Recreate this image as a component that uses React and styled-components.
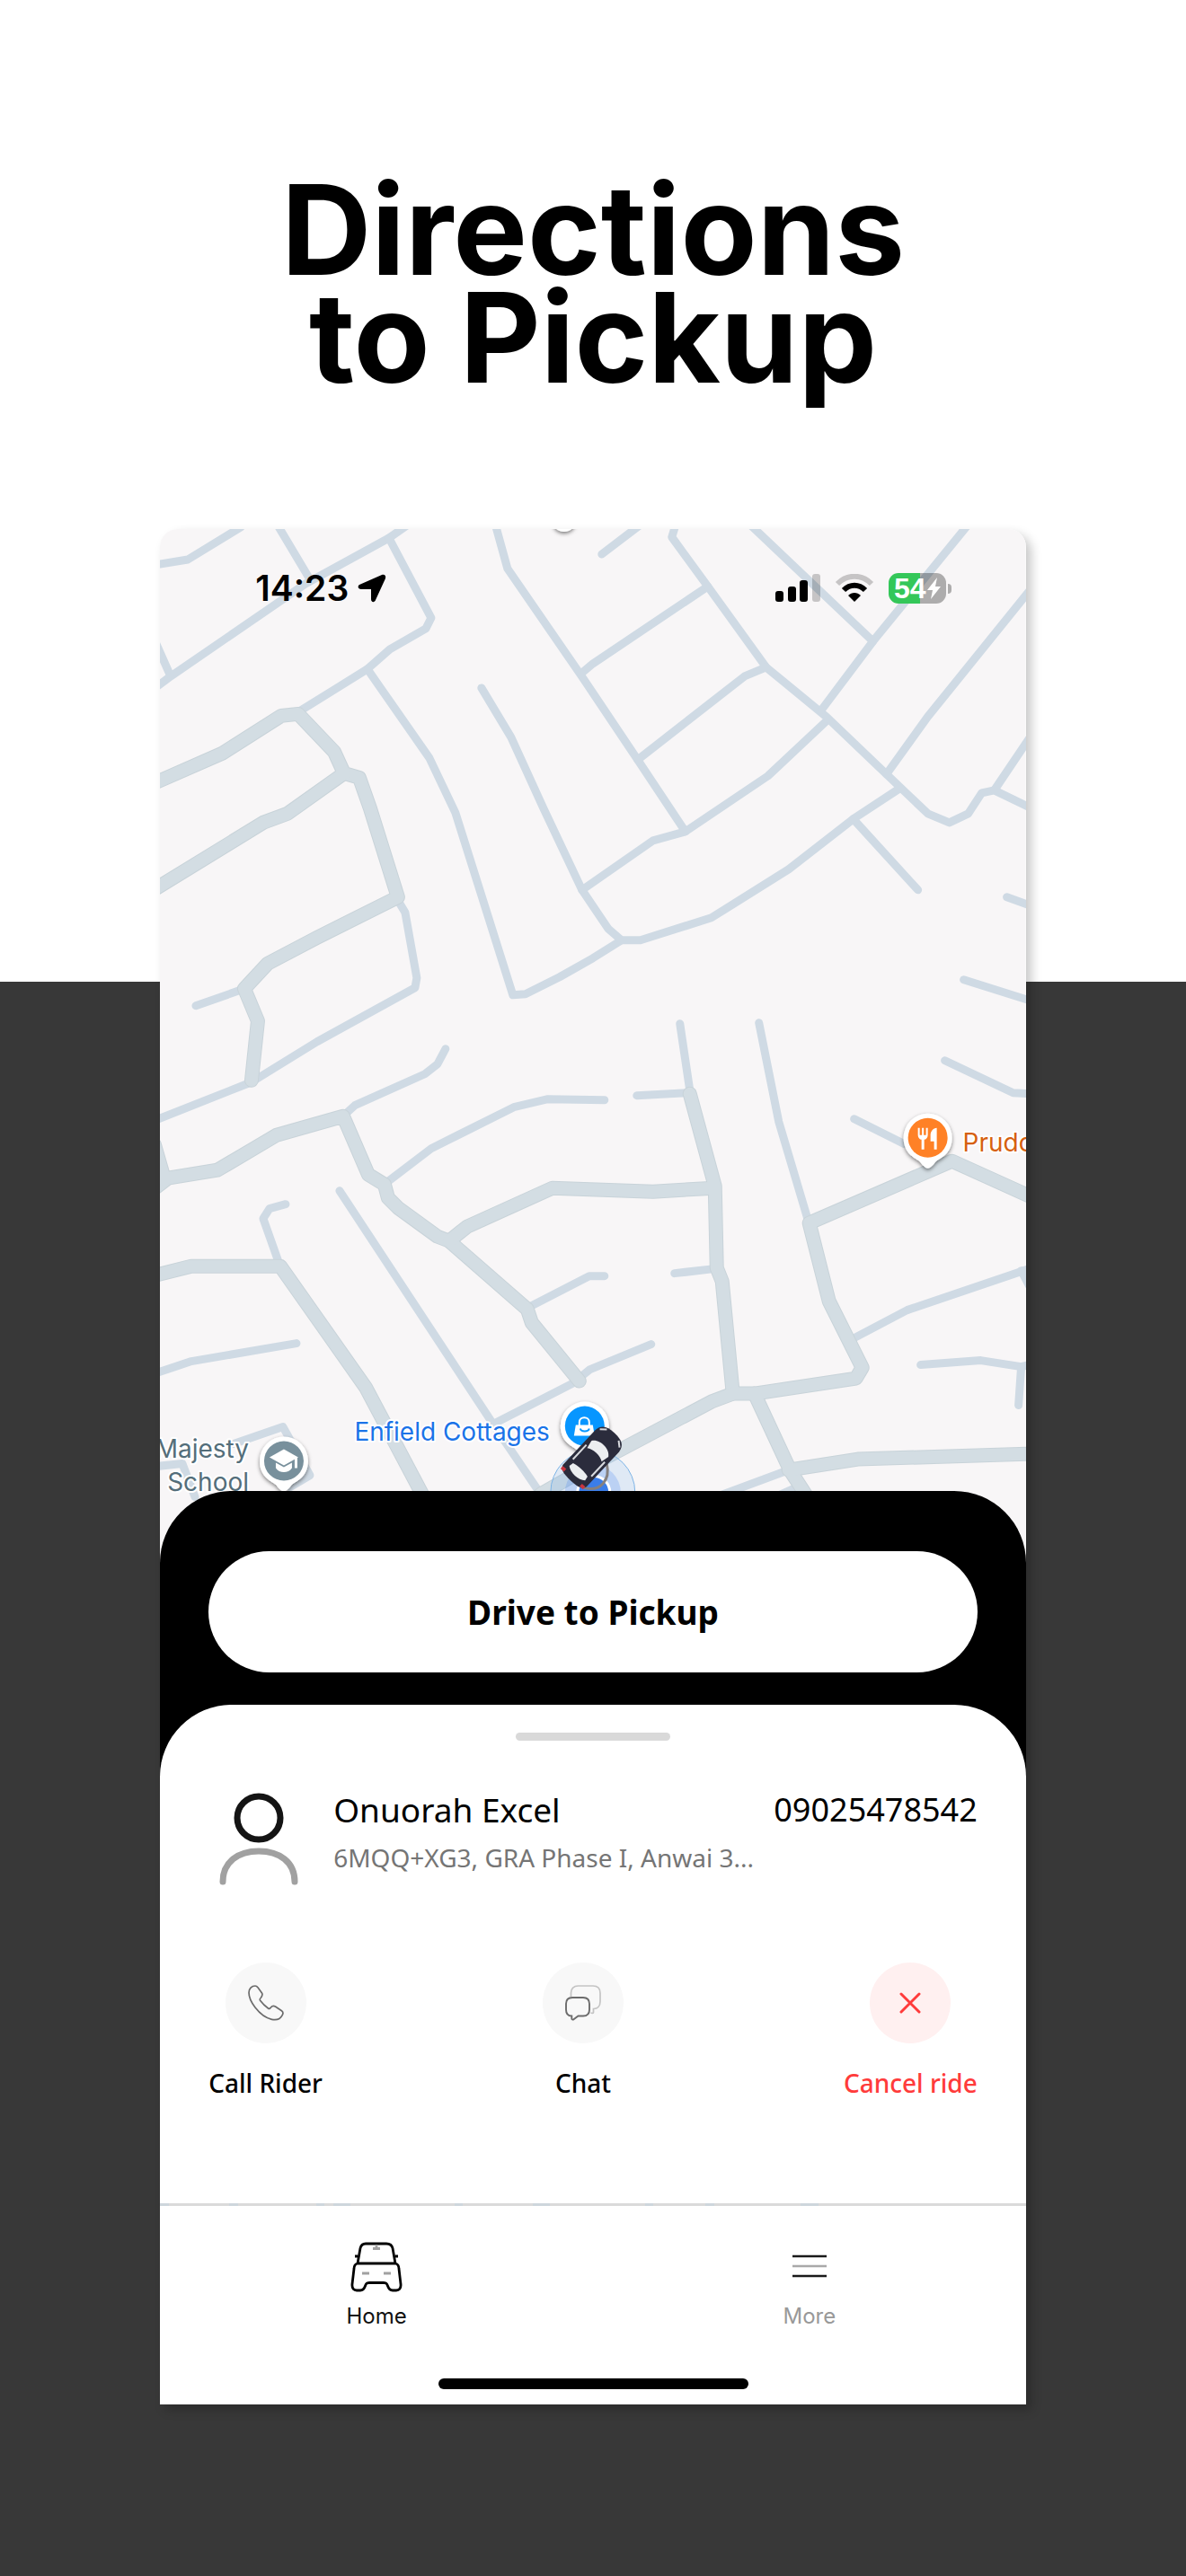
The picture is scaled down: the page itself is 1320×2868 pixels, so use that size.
import React from 'react';
import styled, { createGlobalStyle } from 'styled-components';

const MINOR_ROADS = [
  '0,39 31,34 90,-2',
  '130,-6 167,56',
  '-4,176 12,164 162,61 255,10 275,-4',
  '-4,128 11,162',
  '255,10 302,99 296,111 256,134 231,156 157,202',
  '231,156 300,255 329,316 393,519 407,518 445,499 482,478 514,458',
  '374,-3 387,44 469,163 532,257 585,337',
  '358,177 391,232 427,311 470,402 499,445 514,458 535,458 614,433 700,379 772,323 822,290',
  '470,402 549,347 585,337 677,275 744,212',
  '469,161 482,150 610,64',
  '574,-4 570,9 610,64 675,154 742,209 809,273 855,317 879,327 900,317 915,294 929,291 968,310',
  '532,257 651,164 675,154',
  '492,28 534,-4',
  '656,-6 775,107 794,125',
  '900,-5 794,125 737,201',
  '968,69 855,209 809,273',
  '968,233 929,291',
  '772,323 844,402',
  '943,410 968,419',
  '895,502 968,525',
  '264,412 273,427 286,500 284,511 175,571 102,616 -4,658',
  '40,531 94,512',
  '206,652 217,642 295,607 309,596 318,579',
  '251,729 302,690 394,644 432,635 495,636',
  '200,737 371,997 424,1075',
  '140,752 122,757 115,768 132,816',
  '-4,940 35,927 152,907',
  '410,867 478,832 495,832',
  '371,997 459,952 479,936 547,908',
  '82,1019 137,1000 167,1054 145,1067',
  '-4,1044 25,1041 39,1078',
  '579,551 590,625',
  '531,631 588,628',
  '667,550 689,660 722,771',
  '573,829 617,824',
  '773,657 829,685',
  '874,592 950,628 968,629',
  '775,900 832,870 968,824',
  '959,826 968,843',
  '847,931 914,926 959,933 968,931',
  '959,933 956,976',
  '625,1076 695,1050',
  '685,1078 712,1066',
];

const MAJOR_ROADS = [
  '-4,282 69,250 135,208 154,206 194,248 205,272 222,277 234,311 265,410 175,455 120,484 94,512 109,548 102,614',
  '-4,400 115,327 142,317 205,272',
  '-4,733 9,723 64,714 130,675 204,654 232,719 250,730 254,745 265,756 309,788 322,793 409,869 414,884 467,949',
  '-6,686 5,724',
  '322,793 342,777 437,734 549,738 617,734',
  '-4,831 35,821 134,821 229,956 292,1075',
  '590,629 618,732 620,823 626,838 638,963',
  '424,1075 480,1043 614,972 638,963 662,963 775,946 782,934 772,914 745,860 723,773 882,704 968,743',
  '662,963 702,1049 722,1080',
  '700,1048 777,1036 968,1030',
];

const ACTIONS = [
  { id: 'call', label: 'Call Rider', icon: <PhoneIcon /> },
  { id: 'chat', label: 'Chat', icon: <ChatIcon /> },
  { id: 'cancel', label: 'Cancel ride', icon: <CloseIcon />, danger: true },
];

function PhoneIcon() {
  return (
    <svg width="40" height="40" viewBox="0 0 40 40" fill="none">
      <path
        d="M1 8.500C1 4 4 1 8 1C9.500 1 10.300 1.800 11.200 3L15.500 9C16.800 11 16 12 14.500 14C13 15.500 12.500 16 13.800 17.500C16 20.500 19.500 23.800 22.500 26C23.500 26.800 24.200 26.500 25.200 25.200C26.800 23.200 28.500 22.800 30.500 24L37.500 28.700C39.300 30 39.300 31.500 38.300 33.300C36 38 32 39.500 26.500 38.300C20 36.800 13 31.500 8 25C4 19.800 1 13.500 1 8.500Z"
        stroke="#6c6c6c"
        strokeWidth="1.700"
      />
    </svg>
  );
}

function ChatIcon() {
  return (
    <svg width="40" height="40" viewBox="0 0 40 40" fill="none">
      <path
        d="M6.500 13V9C6.500 4 9.500 1 14.500 1H31C36 1 39 4 39 9V18.500C39 23 36.500 26.500 31.500 26.500V30.500C31.500 31.500 30 31.500 28.500 31"
        stroke="#c4c4c4"
        strokeWidth="1.700"
      />
      <path
        d="M8 14H20C24.500 14 27 16.500 27 21V27.500C27 32 24.500 34.500 20 34.500H14.500L9.500 38.200C8.500 39 7.300 38.500 7.300 37.200V34.500C3.500 34.500 1 32 1 27.500V21C1 16.500 3.500 14 8 14Z"
        stroke="#6c6c6c"
        strokeWidth="1.900"
      />
    </svg>
  );
}

function CloseIcon() {
  return (
    <svg width="40" height="40" viewBox="0 0 40 40" fill="none">
      <path
        d="M10 10L30 30M30 10L10 30"
        stroke="#ff3b3b"
        strokeWidth="3"
        strokeLinecap="round"
      />
    </svg>
  );
}

const AvatarIcon = () => (
  <svg width="112" height="112" viewBox="0 0 112 112" fill="none">
    <circle cx="56" cy="34" r="24" stroke="#141414" strokeWidth="7" />
    <path
      d="M16 105C16 83 33 71 56 71C79 71 96 83 96 105"
      stroke="#a1a1a1"
      strokeWidth="7"
      strokeLinecap="round"
    />
  </svg>
);

const CarIcon = () => (
  <svg width="58" height="60" viewBox="0 -2 58 60" fill="none">
    <path
      d="M8 24L11 7C12 3 14 2 17 2H40C43 2 46 3 47 7L50 24M8 24C4.500 25 4 28 4 30L2 47C1.500 52 4 54 7 54H11C14.500 54 15.500 52 16.500 49C17.500 46 18.500 45.500 21 45.500H37C39.500 45.500 40.500 46 41.500 49C42.500 52 43.500 54 47 54H51C54 54 56.500 52 56 47L54 30C54 28 53.500 25 50 24H8Z"
      stroke="#000"
      strokeWidth="2.800"
    />
    <path d="M5 16H8M50 16H53" stroke="#000" strokeWidth="3" />
    <path
      d="M29 3V8M25 7.500H33M13 35H21M37 35H45"
      stroke="#a1a1a1"
      strokeWidth="2.800"
    />
  </svg>
);

const MenuIcon = () => (
  <svg width="38" height="60" viewBox="0 0 38 60" fill="none">
    <path d="M0 18H38M0 40H38" stroke="#1a1a1a" strokeWidth="2.500" />
    <path d="M0 29H38" stroke="#a9a9a9" strokeWidth="2.500" />
  </svg>
);

const Pin = ({ x, y, color, children }) => (
  <g transform={`translate(${x} ${y})`}>
    <path
      d="M0 34C-3 34 -6 30 -9 26.500C-12 23.500 -27 19 -27 0A27 27 0 0 1 27 0C27 19 12 23.500 9 26.500C6 30 3 34 0 34Z"
      fill="#fff"
      filter="url(#pinShadow)"
    />
    <circle r="22" fill={color} />
    {children}
  </g>
);

const CityMap = () => (
  <MapSvg viewBox="0 0 964 1160" role="img" aria-label="Map">
    <defs>
      <filter id="pinShadow" x="-30%" y="-30%" width="160%" height="170%">
        <feDropShadow dx="0" dy="2" stdDeviation="2" floodOpacity="0.5" />
      </filter>
    </defs>
    <rect width="964" height="1160" fill="#f8f6f7" />
    <g
      fill="none"
      stroke="#cfdae4"
      strokeWidth="9"
      strokeLinecap="round"
      strokeLinejoin="round"
    >
      {MINOR_ROADS.map(points => (
        <polyline key={points} points={points} />
      ))}
    </g>
    <g
      fill="none"
      stroke="#c8d3d9"
      strokeWidth="16"
      strokeLinecap="round"
      strokeLinejoin="round"
    >
      {MAJOR_ROADS.map(points => (
        <polyline key={points} points={points} />
      ))}
    </g>
    <g
      fill="none"
      stroke="#d3dde3"
      strokeWidth="14"
      strokeLinecap="round"
      strokeLinejoin="round"
    >
      {MAJOR_ROADS.map(points => (
        <polyline key={points} points={points} />
      ))}
    </g>

    <circle cx="450" cy="-10" r="13" fill="#fff" filter="url(#pinShadow)" />

    {/* restaurant */}
    <Pin x={855} y={678} color="#ff8126">
      <path
        d="M-11 -11V-3C-11 0 -9 2 -7 2V13H-4V2C-2 2 0 0 0 -3V-11H-2V-3H-4.500V-11H-6.500V-3H-9V-11ZM10 -11C6 -11 3 -7 3 -3V4H7V13H10Z"
        fill="#fff"
      />
    </Pin>
    <MapLabel x="894" y="693" $color="#d6600f">
      Prudo
    </MapLabel>

    {/* school */}
    <Pin x={138} y={1038} color="#78909c">
      <path d="M0 -13L16 -4L0 5L-16 -4Z" fill="#fff" />
      <path
        d="M-9 2V8C-5 14 5 14 9 8V2L0 7ZM12 -4H15V8H12Z"
        fill="#fff"
      />
    </Pin>
    <MapLabel x="99" y="1034" textAnchor="end" $color="#546e7a">
      Majesty
    </MapLabel>
    <MapLabel x="99" y="1071" textAnchor="end" $color="#546e7a">
      School
    </MapLabel>

    {/* lodging */}
    <Pin x={473} y={999} color="#0796ff">
      <path d="M-10 -1H9L11 11H-12Z" fill="#fff" />
      <path
        d="M-6 1V-4C-6 -11 5 -11 5 -4V1"
        fill="none"
        stroke="#fff"
        strokeWidth="2"
      />
      <path
        d="M-5 3C-4 7 4 7 5 3"
        fill="none"
        stroke="#0796ff"
        strokeWidth="2"
      />
    </Pin>
    <MapLabel x="434" y="1015" textAnchor="end" $color="#1a73e8">
      Enfield Cottages
    </MapLabel>

    {/* current location */}
    <circle
      cx="482"
      cy="1073"
      r="47"
      fill="#4a9fe8"
      fillOpacity="0.14"
      stroke="#7db4e6"
    />
    <circle cx="482" cy="1073" r="31" fill="#3c7cf0" fillOpacity="0.22" />
    <circle cx="483" cy="1073" r="18" fill="#3b7de8" stroke="#fff" strokeWidth="3" />

    {/* driver */}
    <g transform="translate(481 1034) rotate(43)">
      <path
        d="M17 -6C32 4 34 22 16 31"
        fill="none"
        stroke="#85807f"
        strokeWidth="3"
      />
      <path
        d="M-18 -25C-17 -34 -11 -37 0 -37C11 -37 17 -34 18 -25V28C17 33 12 35 0 35C-12 35 -17 33 -18 28Z"
        fill="#2b2c3c"
      />
      <path d="M-13 -13C-8 -21 8 -21 13 -13L11 -4C6 -8 -6 -8 -11 -4Z" fill="#eceef0" />
      <path d="M-11 19C-5 17 5 17 11 19L12 24C6 29 -6 29 -12 24Z" fill="#eceef0" />
      <path
        d="M-14 -6V16M14 -6V16M-15 -29L-9 -34M15 -29L9 -34"
        stroke="#d8dade"
        strokeWidth="2"
      />
      <path d="M-17 31H-12M12 31H17" stroke="#c9353f" strokeWidth="4" />
    </g>
  </MapSvg>
);

const Status = () => (
  <StatusBar>
    <StatusGroup>
      <Clock>14:23</Clock>
      <svg width="32" height="32" viewBox="0 0 32 32">
        <path
          d="M2 12L27 1C30 0 32 2 31 5L20 29C19 32 15 32 15 28V17H4C0 17 0 13 2 12Z"
          fill="#000"
        />
      </svg>
    </StatusGroup>
    <StatusGroup $gap="16px">
      <svg width="50" height="32" viewBox="0 0 50 32">
        <rect x="0" y="19" width="9" height="12" rx="3" />
        <rect x="14" y="14" width="9" height="17" rx="3" />
        <rect x="27" y="7" width="9" height="24" rx="3" />
        <rect x="41" y="0" width="9" height="31" rx="3" opacity="0.2" />
      </svg>
      <svg width="44" height="32" viewBox="0 0 44 32" fill="none">
        <path
          d="M3 11C14 0 30 0 41 11"
          stroke="#000"
          strokeOpacity="0.2"
          strokeWidth="6"
        />
        <path d="M10 18C17 11 27 11 34 18" stroke="#000" strokeWidth="6" />
        <path d="M15 24C19 20 25 20 29 24L22 31Z" fill="#000" />
      </svg>
      <BatteryWrap>
        <Battery>
          54
          <svg width="15" height="24" viewBox="0 0 15 24">
            <path d="M11 0L0 14H6L4 24L15 10H9Z" fill="#fff" />
          </svg>
        </Battery>
        <BatteryTip />
      </BatteryWrap>
    </StatusGroup>
  </StatusBar>
);

const App = () => {
  return (
    <>
      <GlobalStyle />
      <Page>
        <Title>
          Directions
          <br />
          to Pickup
        </Title>
        <Phone>
          <MapArea>
            <CityMap />
            <Status />
          </MapArea>
          <PickupSheet>
            <PickupBar>
              <PickupButton type="button">Drive to Pickup</PickupButton>
            </PickupBar>
            <RideSheet>
              <Handle />
              <Rider>
                <AvatarIcon />
                <RiderInfo>
                  <RiderTop>
                    <RiderName>Onuorah Excel</RiderName>
                    <RiderPhone>09025478542</RiderPhone>
                  </RiderTop>
                  <Address>6MQQ+XG3, GRA Phase I, Anwai 3...</Address>
                </RiderInfo>
              </Rider>
              <Actions>
                {ACTIONS.map(action => (
                  <ActionButton
                    key={action.id}
                    type="button"
                    $danger={action.danger}
                  >
                    <ActionCircle $danger={action.danger}>
                      {action.icon}
                    </ActionCircle>
                    {action.label}
                  </ActionButton>
                ))}
              </Actions>
            </RideSheet>
          </PickupSheet>
          <Divider />
          <TabBar>
            <Tab href="#home" $active>
              <CarIcon />
              Home
            </Tab>
            <Tab href="#more">
              <MenuIcon />
              More
            </Tab>
          </TabBar>
          <HomeIndicator />
        </Phone>
      </Page>
    </>
  );
};

export default App;

const GlobalStyle = createGlobalStyle`
  * {
    box-sizing: border-box;
  }

  body {
    margin: 0;
    font-family: 'Noto Sans', sans-serif;
    color: #000;
    background: #383838;
  }

  button {
    font-family: inherit;
    border: none;
    cursor: pointer;
  }

  svg {
    flex-shrink: 0;
  }
`;

const Page = styled.main`
  display: flex;
  flex-direction: column;
  align-items: center;
  min-height: 100vh;
  padding: 196px 0 191px;
  background: linear-gradient(#fff 1093px, #383838 1093px);
`;

const Title = styled.h1`
  margin: 0 0 153px;
  font-family: Inter, sans-serif;
  font-weight: 700;
  font-size: 139px;
  line-height: 120px;
  text-align: center;
`;

const Phone = styled.section`
  display: flex;
  flex-direction: column;
  width: 73%;
  overflow: hidden;
  border-radius: 20px 20px 0 0;
  background: #fff;
  box-shadow: 6px 6px 12px rgba(0, 0, 0, 0.22);
`;

const MapArea = styled.div`
  position: relative;
`;

const MapSvg = styled.svg`
  display: block;
  width: 100%;
`;

const MapLabel = styled.text`
  font-family: Inter, sans-serif;
  font-size: 28px;
  fill: ${props => props.$color};
  stroke: #fff;
  stroke-width: 4px;
  stroke-linejoin: round;
  paint-order: stroke;
`;

const StatusBar = styled.div`
  position: absolute;
  top: 0;
  left: 0;
  right: 0;
  display: flex;
  align-items: center;
  justify-content: space-between;
  padding: 42px 83px 0 106px;
`;

const StatusGroup = styled.div`
  display: flex;
  align-items: center;
  gap: ${props => props.$gap || '10px'};
`;

const Clock = styled.span`
  font-family: Inter, sans-serif;
  font-weight: 600;
  font-size: 39px;
  line-height: 48px;
`;

const BatteryWrap = styled.div`
  display: flex;
  align-items: center;
  gap: 2px;
`;

const Battery = styled.div`
  display: flex;
  align-items: center;
  justify-content: center;
  gap: 1px;
  width: 64px;
  height: 34px;
  border-radius: 11px;
  background: linear-gradient(90deg, #34c759 54%, rgba(0, 0, 0, 0.3) 54%);
  color: #fff;
  font-family: 'Liberation Sans', sans-serif;
  font-weight: 700;
  font-size: 32px;
  line-height: 34px;
`;

const BatteryTip = styled.span`
  width: 4px;
  height: 11px;
  border-radius: 0 4px 4px 0;
  background: rgba(0, 0, 0, 0.3);
`;

const PickupSheet = styled.div`
  position: relative;
  margin-top: -89px;
  border-radius: 80px 80px 0 0;
  background: #000;
`;

const PickupBar = styled.div`
  padding: 67px 54px 36px;
`;

const PickupButton = styled.button`
  display: block;
  width: 100%;
  height: 135px;
  border-radius: 68px;
  background: #fff;
  color: #000;
  font-weight: 700;
  font-size: 37px;
`;

const RideSheet = styled.div`
  padding: 31px 54px 116px;
  border-radius: 80px 80px 0 0;
  background: #fff;
`;

const Handle = styled.div`
  width: 172px;
  height: 9px;
  margin: 0 auto 52px;
  border-radius: 5px;
  background: #d9d9d9;
`;

const Rider = styled.div`
  display: flex;
  gap: 27px;
  margin-bottom: 83px;
`;

const RiderInfo = styled.div`
  flex: 1;
`;

const RiderTop = styled.div`
  display: flex;
  justify-content: space-between;
`;

const RiderName = styled.h2`
  margin: 0;
  font-weight: 400;
  font-size: 37px;
  line-height: 50px;
`;

const RiderPhone = styled.span`
  font-size: 36px;
  line-height: 50px;
`;

const Address = styled.p`
  margin: 10px 0 0;
  font-size: 28px;
  line-height: 36px;
  color: #757575;
`;

const Actions = styled.div`
  display: flex;
  justify-content: space-between;
`;

const ActionButton = styled.button`
  display: flex;
  flex-direction: column;
  align-items: center;
  gap: 26px;
  padding: 0;
  background: none;
  font-weight: 500;
  font-size: 28px;
  line-height: 36px;
  color: ${props => (props.$danger ? '#ff3b3b' : '#000')};
`;

const ActionCircle = styled.span`
  display: flex;
  align-items: center;
  justify-content: center;
  width: 90px;
  height: 90px;
  border-radius: 50%;
  background: ${props => (props.$danger ? '#fff0f0' : '#f8f8f8')};
`;

const Divider = styled.div`
  height: 3px;
  background: linear-gradient(
    90deg,
    #ced6dc 0% 1%,
    #dadada 1% 8%,
    #ced6dc 8% 9%,
    #dadada 9% 18%,
    #ced6dc 18% 19%,
    #dadada 19% 20%,
    #ced6dc 20% 22%,
    #dadada 22% 34%,
    #ced6dc 34% 35%,
    #dadada 35% 43%,
    #ced6dc 43% 45%,
    #dadada 45% 56%,
    #ced6dc 56% 57%,
    #dadada 57% 63%,
    #ced6dc 63% 64%,
    #dadada 64% 74%,
    #ced6dc 74% 76%,
    #dadada 76%
  );
`;

const TabBar = styled.nav`
  display: flex;
  padding-top: 38px;
`;

const Tab = styled.a`
  flex: 1;
  display: flex;
  flex-direction: column;
  align-items: center;
  gap: 9px;
  font-family: Inter, sans-serif;
  font-size: 24px;
  line-height: 32px;
  text-decoration: none;
  color: ${props => (props.$active ? '#111' : '#999')};
`;

const HomeIndicator = styled.div`
  width: 345px;
  height: 12px;
  margin: 53px auto 17px;
  border-radius: 6px;
  background: #000;
`;
